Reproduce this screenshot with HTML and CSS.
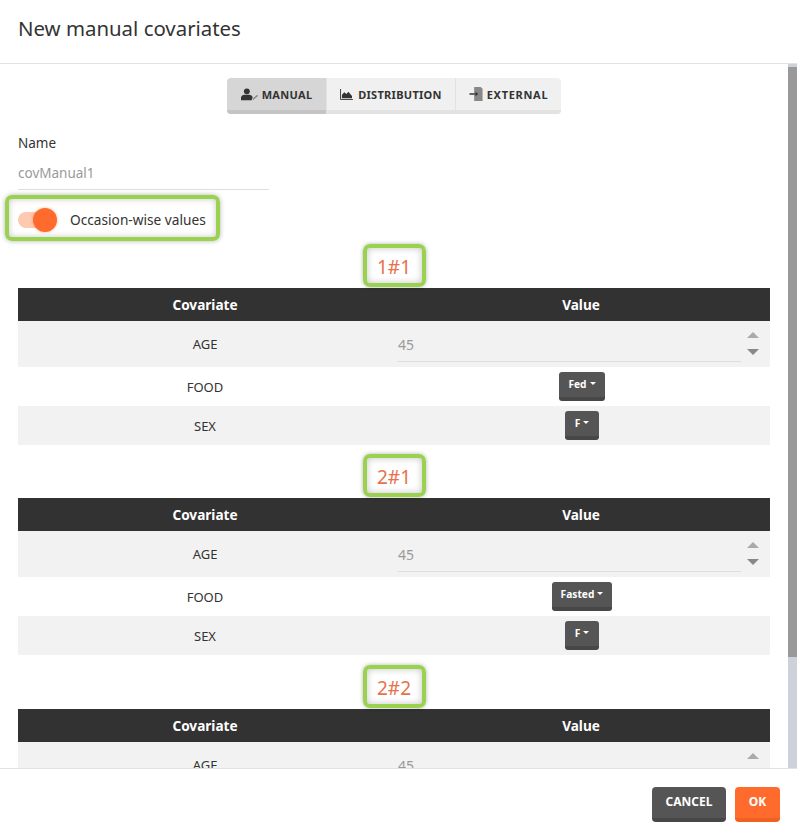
FILE: index.html
```html
<!DOCTYPE html>
<html lang="en">
<head>
<meta charset="utf-8">
<title>New manual covariates</title>
<link rel="stylesheet" href="styles.css">
</head>
<body>
<div class="dialog">
  <header class="dialog-header"><h1 class="dialog-title">New manual covariates</h1></header>
  <div class="dialog-scroll">
  <main class="dialog-body">
    <div class="tabs-wrap">
      <div class="tabs">
        <button class="tab tab-manual tab-active">
          <svg class="tab-icon icon-manual" viewBox="0 0 20 14"><circle cx="6.5" cy="3.5" r="3.3" fill="#333"/><path d="M0 13.5V11c0-2.5 2-3.7 4-3.7h5c2 0 3.6 1.1 3.8 3l-1 3.2z" fill="#333"/><path d="M13 12.5l5.5-4.5" stroke="#888" stroke-width="1.6"/></svg>
          MANUAL
        </button>
        <button class="tab tab-dist">
          <svg class="tab-icon icon-dist" viewBox="0 0 14 12"><path d="M.5 0v11.5H14" fill="none" stroke="#333" stroke-width="1"/><path d="M2 10V6.5L4.500 3.500 7 5.500 9 3l4 4.500V10z" fill="#333"/></svg>
          DISTRIBUTION
        </button>
        <button class="tab tab-ext">
          <svg class="tab-icon icon-ext" viewBox="0 0 15 15"><path d="M5 0h7l2 2v13H5V8.500h3.500V6.500H5z" fill="#888"/><path d="M0 7.500h8" stroke="#333" stroke-width="1.500"/><path d="M6.500 5l3 2.500-3 2.500z" fill="#333"/></svg>
          EXTERNAL
        </button>
      </div>
    </div>

    <div class="field">
      <label class="field-label">Name</label>
      <div class="field-value">covManual1</div>
    </div>

    <div class="toggle-row">
      <span class="toggle"><span class="toggle-knob"></span></span>
      <span class="toggle-label">Occasion-wise values</span>
    </div>

    <section class="occasion occasion-first">
      <div class="occasion-title"><span class="highlight">1#1</span></div>
      <table class="cov-table">
        <thead><tr><th>Covariate</th><th>Value</th></tr></thead>
        <tbody>
          <tr class="row-age"><td>AGE</td><td><div class="num-input"><span class="num-value">45</span><span class="spin"><i class="spin-up"></i><i class="spin-down"></i></span></div></td></tr>
          <tr><td>FOOD</td><td><button class="dropdown">Fed<i class="caret"></i></button></td></tr>
          <tr><td>SEX</td><td><button class="dropdown">F<i class="caret"></i></button></td></tr>
        </tbody>
      </table>
    </section>

    <section class="occasion">
      <div class="occasion-title"><span class="highlight">2#1</span></div>
      <table class="cov-table">
        <thead><tr><th>Covariate</th><th>Value</th></tr></thead>
        <tbody>
          <tr class="row-age"><td>AGE</td><td><div class="num-input"><span class="num-value">45</span><span class="spin"><i class="spin-up"></i><i class="spin-down"></i></span></div></td></tr>
          <tr><td>FOOD</td><td><button class="dropdown">Fasted<i class="caret"></i></button></td></tr>
          <tr><td>SEX</td><td><button class="dropdown">F<i class="caret"></i></button></td></tr>
        </tbody>
      </table>
    </section>

    <section class="occasion occasion-last">
      <div class="occasion-title"><span class="highlight">2#2</span></div>
      <table class="cov-table">
        <thead><tr><th>Covariate</th><th>Value</th></tr></thead>
        <tbody>
          <tr class="row-age"><td>AGE</td><td><div class="num-input"><span class="num-value">45</span><span class="spin"><i class="spin-up"></i><i class="spin-down"></i></span></div></td></tr>
        </tbody>
      </table>
    </section>
  </main>
  <div class="scrollbar"><div class="scrollbar-thumb"></div></div>
  </div>
  <footer class="dialog-footer">
    <button class="btn btn-cancel">CANCEL</button>
    <button class="btn btn-ok">OK</button>
  </footer>
</div>
</body>
</html>
```

FILE: styles.css
```css
* { box-sizing: border-box; }
html, body { margin: 0; height: 100%; overflow: hidden; background: #fff; }
body { font-family: "Noto Sans", "Open Sans", sans-serif; color: #333; font-size: 14px; }
button { font-family: inherit; border: 0; cursor: pointer; }

.dialog { height: 833px; display: flex; flex-direction: column; }
.dialog-header { height: 64px; padding: 15px 18px 0; border-bottom: 1px solid #e2e2e2; flex: none; }
.dialog-title { margin: 0; font-size: 20.400px; line-height: 27px; font-weight: 400; color: #333; }

.dialog-scroll { position: relative; flex: 1; min-height: 0; }
.dialog-body { height: 100%; overflow: hidden; padding: 14px 27px 40px 18px; }
.scrollbar { position: absolute; top: 0; right: 0; bottom: 0; width: 9px; padding-top: 3px; background: #cdd1d9; }
.scrollbar-thumb { height: 590px; background: #999; }

.tabs-wrap { display: flex; justify-content: center; }
.tabs { display: flex; height: 36px; border-radius: 4px; overflow: hidden; }
.tab { display: flex; align-items: center; justify-content: center; gap: 3px; height: 36px; padding: 0; background: #f0f0f0; border-bottom: 4px solid #e2e2e2; color: #333; font-size: 11px; font-weight: 700; letter-spacing: .3px; }
.tab + .tab { border-left: 1px solid #e2e2e2; }
.tab-manual { width: 99px; }
.tab-dist { width: 129px; gap: 5px; }
.tab-ext { width: 106px; letter-spacing: .7px; }
.tab-active { background: #d6d6d6; border-bottom-color: #c4c4c4; }
.tab-icon { flex: none; }
.icon-manual { width: 18px; height: 13px; }
.icon-dist { width: 13px; height: 11px; }
.icon-ext { width: 15px; height: 14px; }

.field { margin-top: 20px; width: 251px; }
.field-label { display: block; font-size: 13.500px; line-height: 18px; color: #333; }
.field-value { margin-top: 11px; height: 27px; line-height: 20px; font-size: 13.500px; color: #9a9a9a; border-bottom: 1px solid #ddd; }

.toggle-row { display: flex; align-items: center; width: 215px; height: 46px; margin: 5px 0 0 -13px; padding: 3px 0 0 9px; border: 4px solid #9ad24f; border-radius: 7px; box-shadow: 0 0 5px rgba(0,0,0,.3), inset 0 0 6px rgba(0,0,0,.22); }
.toggle { position: relative; width: 32px; height: 16px; border-radius: 8px; background: #ffc9b0; flex: none; }
.toggle-knob { position: absolute; top: -4px; right: -7px; width: 24px; height: 24px; border-radius: 50%; background: #ff6b2c; box-shadow: 0 0 3px rgba(255,107,44,.5); }
.toggle-label { margin-left: 20px; font-size: 13.700px; white-space: nowrap; color: #333; }

.occasion { margin-top: 9px; }
.occasion-first { margin-top: 3px; }
.occasion-last { margin-top: 10px; }
.occasion-title { display: flex; justify-content: center; height: 44px; }
.highlight { display: block; width: 63px; height: 43px; line-height: 38px; text-align: center; font-size: 19px; color: #e8704a; border: 4px solid #9ad24f; border-radius: 7px; box-shadow: 0 0 4px rgba(0,0,0,.3), inset 0 0 7px rgba(0,0,0,.24); }

.cov-table { width: 752px; border-collapse: collapse; table-layout: fixed; }
.cov-table th { height: 33px; padding: 0; background: #323232; color: #fff; font-size: 13.600px; font-weight: 700; text-align: center; }
.cov-table td { height: 39px; padding: 0; text-align: center; font-size: 13px; color: #333; }
.cov-table tbody tr:nth-child(odd) td { background: #f2f2f2; }
.cov-table th:first-child, .cov-table td:first-child { width: 374px; }
.row-age td { height: 46px !important; }

.num-input { display: flex; align-items: stretch; height: 46px; padding-left: 6px; }
.num-value { width: 343px; height: 41px; line-height: 47px; text-align: left; color: #9a9a9a; font-size: 14px; border-bottom: 1px solid #ddd; }
.spin { display: flex; flex-direction: column; justify-content: center; gap: 11px; width: 24px; align-items: center; padding-bottom: 1px; }
.spin i { display: block; width: 0; height: 0; border-left: 6px solid transparent; border-right: 6px solid transparent; }
.spin-up { border-bottom: 6px solid #aaa; }
.spin-down { border-top: 6px solid #888; }

.dropdown { display: inline-flex; align-items: center; justify-content: center; gap: 3px; min-width: 34px; height: 29px; margin-left: 2px; padding: 0 9px 1px; background: #555; border-bottom: 4px solid #474747; border-radius: 3px; color: #fff; font-size: 10.200px; font-weight: 700; vertical-align: middle; }
.caret { width: 0; height: 0; border-left: 3px solid transparent; border-right: 3px solid transparent; border-top: 3px solid #fff; margin-top: -2px; }

.dialog-footer { flex: none; height: 65px; display: flex; justify-content: flex-end; align-items: flex-start; gap: 9px; padding: 18px 17px 0 0; border-top: 1px solid #e2e2e2; }
.btn { height: 35px; padding: 0 0 2px; border-radius: 4px; color: #fff; font-size: 12px; font-weight: 700; }
.btn-cancel { width: 74px; background: #555; border-bottom: 4px solid #474747; }
.btn-ok { width: 45px; background: #ff6b2c; border-bottom: 4px solid #f06020; }
```
